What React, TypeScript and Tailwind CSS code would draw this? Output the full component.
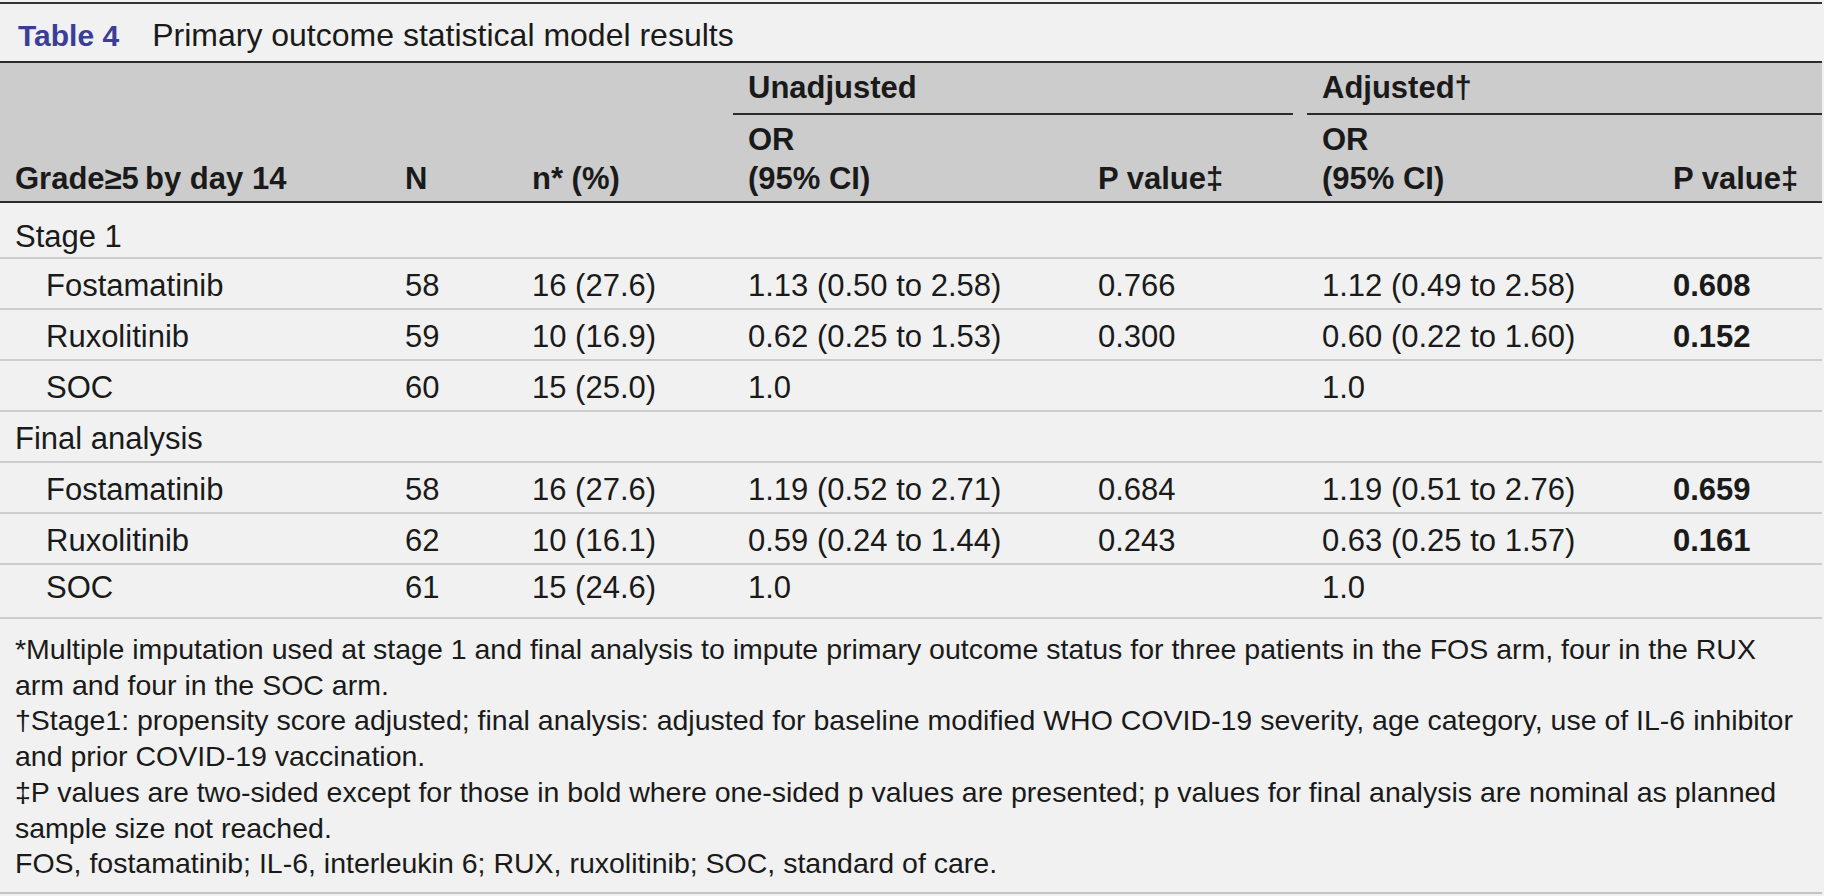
import React from 'react';

interface ResultRow {
  label: string;
  n: string;
  pct: string;
  orU: string;
  pU: string;
  orA: string;
  pA: string;
}

const grid = 'grid grid-cols-[390px_127px_216px_350px_224px_351px_164px]';

const stage1: ResultRow[] = [
  { label: 'Fostamatinib', n: '58', pct: '16 (27.6)', orU: '1.13 (0.50 to 2.58)', pU: '0.766', orA: '1.12 (0.49 to 2.58)', pA: '0.608' },
  { label: 'Ruxolitinib', n: '59', pct: '10 (16.9)', orU: '0.62 (0.25 to 1.53)', pU: '0.300', orA: '0.60 (0.22 to 1.60)', pA: '0.152' },
  { label: 'SOC', n: '60', pct: '15 (25.0)', orU: '1.0', pU: '', orA: '1.0', pA: '' },
];

const finalAnalysis: ResultRow[] = [
  { label: 'Fostamatinib', n: '58', pct: '16 (27.6)', orU: '1.19 (0.52 to 2.71)', pU: '0.684', orA: '1.19 (0.51 to 2.76)', pA: '0.659' },
  { label: 'Ruxolitinib', n: '62', pct: '10 (16.1)', orU: '0.59 (0.24 to 1.44)', pU: '0.243', orA: '0.63 (0.25 to 1.57)', pA: '0.161' },
  { label: 'SOC', n: '61', pct: '15 (24.6)', orU: '1.0', pU: '', orA: '1.0', pA: '' },
];

function DataRow({ row, last = false }: { row: ResultRow; last?: boolean }) {
  return (
    <div
      className={`${grid} border-b-2 border-[#cdcdcd] ${
        last ? 'h-[54px] pt-[5px]' : 'h-[51px] pt-[9px]'
      }`}
    >
      <div className="pl-[46px]">{row.label}</div>
      <div className="pl-[15px]">{row.n}</div>
      <div className="pl-[15px]">{row.pct}</div>
      <div className="pl-[15px]">{row.orU}</div>
      <div className="pl-[15px]">{row.pU}</div>
      <div className="pl-[15px]">{row.orA}</div>
      <div className="pl-[15px] font-bold">{row.pA}</div>
    </div>
  );
}

export default function App() {
  return (
    <div className="min-h-screen bg-[#f1f1f1] font-['Liberation_Sans',Arial,Helvetica,sans-serif] text-[#1a1a1a]">
      <div className="w-[1822px] pt-[2px]">
        {/* Caption */}
        <div className="flex items-baseline border-t-2 border-[#333333] pt-[13px] pb-[7px] pl-[18px] text-[32px] leading-[36px]">
          <span className="font-bold text-[30px] text-[#3b3d98]">Table 4</span>
          <span className="ml-[33px]">Primary outcome statistical model results</span>
        </div>

        {/* Header */}
        <div className={`${grid} border-y-2 border-[#2b2b2b] bg-[#cccccc] text-[31px] font-bold`}>
          <div className="row-span-2 self-end pl-[15px] pb-[3px] leading-[39px] whitespace-nowrap">
            Grade≥5{'\u2009'}by day 14
          </div>
          <div className="row-span-2 self-end pl-[15px] pb-[3px] leading-[39px]">N</div>
          <div className="row-span-2 self-end pl-[15px] pb-[3px] leading-[39px]">n* (%)</div>
          <div className="col-span-2 pt-[7px]">
            <div className="pl-[15px] leading-[36px]">Unadjusted</div>
            <div className="mt-[7px] mr-[14px] h-[2px] bg-[#2b2b2b]" />
          </div>
          <div className="col-span-2 pt-[7px]">
            <div className="pl-[15px] leading-[36px]">Adjusted†</div>
            <div className="mt-[7px] h-[2px] bg-[#2b2b2b]" />
          </div>
          <div className="pl-[15px] pt-[5px] pb-[3px] leading-[39px]">
            OR
            <br />
            (95% CI)
          </div>
          <div className="self-end pl-[15px] pb-[3px] leading-[39px]">P value‡</div>
          <div className="pl-[15px] pt-[5px] pb-[3px] leading-[39px]">
            OR
            <br />
            (95% CI)
          </div>
          <div className="self-end pl-[15px] pb-[3px] leading-[39px]">P value‡</div>
        </div>

        {/* Body */}
        <div className="text-[31px] leading-[36px]">
          <div className="h-[56px] border-b-2 border-[#cdcdcd] pt-[16px] pl-[15px]">Stage 1</div>
          {stage1.map((row) => (
            <DataRow key={`s-${row.label}`} row={row} />
          ))}
          <div className="h-[51px] border-b-2 border-[#cdcdcd] pt-[9px] pl-[15px]">Final analysis</div>
          {finalAnalysis.map((row, i) => (
            <DataRow key={`f-${row.label}`} row={row} last={i === finalAnalysis.length - 1} />
          ))}
        </div>

        {/* Footnotes */}
        <div className="border-b-2 border-[#c4c4c4] pt-[13px] pb-[10px] pl-[15px] text-[28.5px] leading-[35.7px] whitespace-nowrap">
          <p>
            *Multiple imputation used at stage 1 and final analysis to impute primary outcome status for three patients in the FOS arm, four in the RUX
            <br />
            arm and four in the SOC arm.
          </p>
          <p>
            †Stage1: propensity score adjusted; final analysis: adjusted for baseline modified WHO COVID-19 severity, age category, use of IL-6 inhibitor
            <br />
            and prior COVID-19 vaccination.
          </p>
          <p>
            ‡P values are two-sided except for those in bold where one-sided p values are presented; p values for final analysis are nominal as planned
            <br />
            sample size not reached.
          </p>
          <p>FOS, fostamatinib; IL-6, interleukin 6; RUX, ruxolitinib; SOC, standard of care.</p>
        </div>
      </div>
    </div>
  );
}
